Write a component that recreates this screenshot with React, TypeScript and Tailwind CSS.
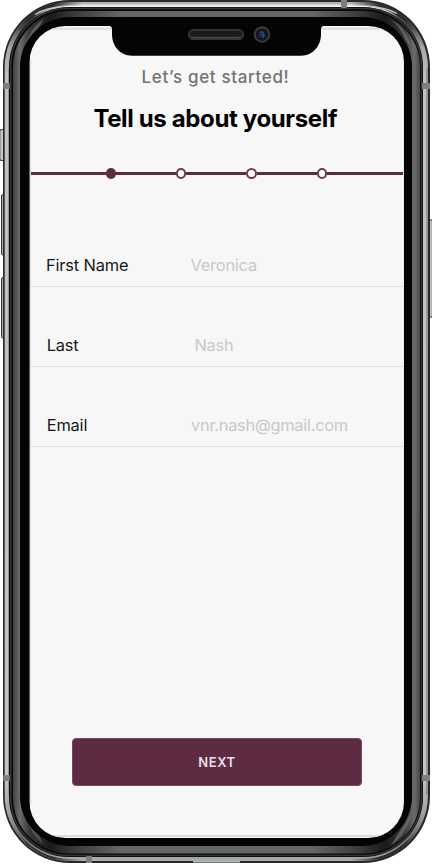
import React from "react";

const fields = [
  { label: "First Name", placeholder: "Veronica", labelPad: "pl-[15px]", inputPad: "pl-[0.5px]", tracking: "tracking-[-0.22px]" },
  { label: "Last", placeholder: "Nash", labelPad: "pl-[15.7px]", inputPad: "pl-[4.4px]", tracking: "tracking-[-0.2px]" },
  { label: "Email", placeholder: "vnr.nash@gmail.com", labelPad: "pl-[15.7px]", inputPad: "pl-px", tracking: "tracking-[-0.26px]" },
];

/** Metal body, side buttons, bezel and notch of the phone. */
function PhoneShell() {
  return (
    <svg className="pointer-events-none absolute inset-0" width="432" height="864" viewBox="0 0 432 864" fill="none" aria-hidden="true">
      <defs>
        <linearGradient id="steel" x1="0" y1="0" x2="0" y2="864" gradientUnits="userSpaceOnUse">
          <stop offset="0" stopColor="#a8a8a8" />
          <stop offset=".004" stopColor="#b4b4b4" />
          <stop offset=".007" stopColor="#f2f4f4" />
          <stop offset=".013" stopColor="#cfd2d2" />
          <stop offset=".02" stopColor="#555858" />
          <stop offset=".032" stopColor="#4f5252" />
          <stop offset=".055" stopColor="#a4a7a7" />
          <stop offset=".09" stopColor="#bfc2c2" />
          <stop offset=".9" stopColor="#c4c4c5" />
          <stop offset=".94" stopColor="#a0a4a2" />
          <stop offset=".965" stopColor="#6c7270" />
          <stop offset=".98" stopColor="#7d8581" />
          <stop offset="1" stopColor="#b2bbb7" />
        </linearGradient>
        <linearGradient id="inner" x1="13" y1="0" x2="421" y2="0" gradientUnits="userSpaceOnUse">
          <stop offset="0" stopColor="#404040" />
          <stop offset=".017" stopColor="#6c6c6c" />
          <stop offset=".04" stopColor="#383838" />
          <stop offset=".09" stopColor="#191919" />
          <stop offset=".15" stopColor="#3b3b3b" />
          <stop offset=".27" stopColor="#676767" />
          <stop offset=".73" stopColor="#676767" />
          <stop offset=".85" stopColor="#3b3b3b" />
          <stop offset=".91" stopColor="#191919" />
          <stop offset=".96" stopColor="#383838" />
          <stop offset=".983" stopColor="#6c6c6c" />
          <stop offset="1" stopColor="#404040" />
        </linearGradient>
        <linearGradient id="button" x1="0" y1="0" x2="1" y2="0">
          <stop offset="0" stopColor="#777" />
          <stop offset=".35" stopColor="#d2d4d4" />
          <stop offset="1" stopColor="#8c8e8e" />
        </linearGradient>
        <linearGradient id="speaker" x1="0" y1="0" x2="0" y2="1">
          <stop offset="0" stopColor="#161616" />
          <stop offset="1" stopColor="#222" />
        </linearGradient>
        <linearGradient id="shadeLeft" x1="18" y1="0" x2="82" y2="0" gradientUnits="userSpaceOnUse">
          <stop offset="0" stopColor="#2c2d2d" stopOpacity="0" />
          <stop offset=".15" stopColor="#2c2d2d" />
          <stop offset=".55" stopColor="#2c2d2d" />
          <stop offset="1" stopColor="#2c2d2d" stopOpacity="0" />
        </linearGradient>
        <linearGradient id="shadeRight" x1="351" y1="0" x2="415" y2="0" gradientUnits="userSpaceOnUse">
          <stop offset="0" stopColor="#2c2d2d" stopOpacity="0" />
          <stop offset=".45" stopColor="#2c2d2d" />
          <stop offset=".85" stopColor="#2c2d2d" />
          <stop offset="1" stopColor="#2c2d2d" stopOpacity="0" />
        </linearGradient>
        <radialGradient id="lens">
          <stop offset="0" stopColor="#182f5c" />
          <stop offset=".55" stopColor="#14213c" />
          <stop offset="1" stopColor="#101010" />
        </radialGradient>
        <clipPath id="glass">
          <rect x="29.5" y="26" width="374.5" height="812" rx="36" />
        </clipPath>
      </defs>

      <rect x="-.5" y="129.5" width="7" height="31" rx="2" fill="url(#button)" stroke="#2c2c2c" />
      <rect x="1.5" y="194.5" width="5" height="60.5" rx="1.5" fill="url(#button)" stroke="#333" />
      <rect x="1.5" y="277.5" width="5" height="60.5" rx="1.5" fill="url(#button)" stroke="#333" />
      <rect x="427.5" y="220" width="6" height="97" rx="1.5" fill="url(#button)" stroke="#222" />

      <rect x="3" y="0" width="427" height="863" rx="67" fill="#292929" />
      <rect x="4.7" y="2" width="423.2" height="859" rx="65" fill="url(#steel)" />
      <path d="M427 68V795" stroke="#747171" strokeWidth="1" />
      <path d="M8.5 68V795" stroke="#949797" strokeWidth="1" />
      <path d="M18 30.5A63.5 63.5 0 0 1 70 3.5H82" stroke="url(#shadeLeft)" strokeWidth="4" />
      <path d="M351 3.5H363A63.5 63.5 0 0 1 415 30.5" stroke="url(#shadeRight)" strokeWidth="4" />
      <path d="M415 833A63.5 63.5 0 0 1 363 860H351" stroke="url(#shadeRight)" strokeWidth="2.5" />
      <path d="M82 860H70A63.5 63.5 0 0 1 18 833" stroke="url(#shadeLeft)" strokeWidth="1.8" />
      <path d="M35 14.5C43 9.5 52 7 65 6.2" stroke="#c5c8c8" strokeWidth="1.4" />
      <path d="M368 6.2C381 7 390 9.5 397 13.5" stroke="#c5c8c8" strokeWidth="1.4" />

      <rect x="9" y="7" width="414" height="850" rx="60" fill="#080808" />
      <rect x="10.7" y="8.5" width="410.8" height="847" rx="58" stroke="#343434" strokeWidth="1.6" />
      <rect x="13" y="11" width="407" height="842.5" rx="56" fill="url(#inner)" />
      <path d="M25 50C27 36 33 26 44 19L37 30C31 36 27 42 25 50Z" fill="#777" opacity=".65" />
      <path d="M391 20C402 25 408 35 411 47L405 39C402 31 397 24 391 20Z" fill="#777" opacity=".65" />
      <path d="M26 815C29 829 35 838 43 844L37 831Z" fill="#646464" opacity=".65" />
      <path d="M391 845C402 838 409 826 412 812L404 825Z" fill="#777" opacity=".65" />
      <rect x="20" y="17" width="392" height="829" rx="50" fill="#040404" />

      <g fill="#7e7e7e">
        <rect x="3.3" y="83" width="6.5" height="6" />
        <rect x="422" y="83" width="8" height="6" />
        <rect x="3.3" y="775" width="6.5" height="6" />
        <rect x="422" y="775" width="8" height="6" />
        <rect x="341" y="0" width="6" height="8" />
        <rect x="86" y="856" width="6" height="7" />
      </g>
      <path d="M193 861.8H240" stroke="#b7bebb" strokeWidth="1.5" />

      <g clipPath="url(#glass)">
        <rect x="29.5" y="26" width="374.5" height="812" fill="#f7f7f7" />
        <path d="M52 28.7H112M321 28.7H381" stroke="#dedede" strokeWidth="2" />
        <path d="M54 836H379" stroke="#dedede" strokeWidth="2" />
        <path d="M30.3 59V805" stroke="#dedcdd" strokeWidth="1.5" />
        <path d="M403.5 62V802" stroke="#e8e8e8" />
      </g>

      <path d="M108 25.8C111 25.8 112 27 112 29.5V34C112 46 120 55.7 132 55.7H301C313 55.7 321 46 321 34V29.5C321 27 322 25.8 325 25.8V20H108Z" fill="#040404" />
      <rect x="188.9" y="29.9" width="54.2" height="9.2" rx="4.6" fill="url(#speaker)" stroke="#363636" strokeWidth="1.8" />
      <path d="M191.5 36.2C192.2 37.3 193 37.8 194 37.8H238C239.2 37.8 240 37.3 240.5 36.2" stroke="#666" strokeWidth=".8" />
      <circle cx="262" cy="34.5" r="7.3" fill="#171717" stroke="#3b3b3b" strokeWidth="2" />
      <circle cx="262" cy="34.5" r="4.8" fill="url(#lens)" />
      <path d="M259.8 32.5L262 31.7L264 33M261.7 34.7L264 34.5V36.8L262 37.3" stroke="#315cae" strokeWidth="1" />
      <circle cx="260" cy="36" r=".8" fill="#294681" />
    </svg>
  );
}

function ProgressSteps() {
  return (
    <div className="flex h-[11px] items-center">
      <span className="h-[3px] w-[74.5px] bg-[#5e2c42]" />
      <span className="size-[10.5px] shrink-0 rounded-full bg-[#5e2c42]" />
      {[0, 1, 2].map((step) => (
        <React.Fragment key={step}>
          <span className="h-[3px] w-[60px] bg-[#5e2c42]" />
          <span className="size-[10.3px] shrink-0 rounded-full border-2 border-[#6b3c50] bg-white" />
        </React.Fragment>
      ))}
      <span className="h-[3px] flex-1 bg-[#5e2c42]" />
    </div>
  );
}

export default function App() {
  return (
    <div className="relative h-[864px] w-[432px] overflow-hidden bg-white font-['Inter',sans-serif]">
      <PhoneShell />
      <main className="relative mr-[29px] ml-[31px] flex h-[864px] flex-col pt-[65px]">
        <p className="pr-[3px] text-center text-[17px] leading-[24px] font-medium tracking-[0.64px] text-[#737373]">Let’s get started!</p>
        <h1 className="mt-[14px] pr-[3.5px] text-center text-[24px] leading-[32px] font-bold tracking-[-0.36px] whitespace-nowrap text-black">Tell us about yourself</h1>
        <div className="mt-[33px]">
          <ProgressSteps />
        </div>
        <form className="mt-[28px] flex flex-1 flex-col">
          {fields.map((field) => (
            <label key={field.label} className="flex h-[80px] items-end border-b border-[#dedede] pb-[9px] leading-[24px]">
              <span className={`w-[159px] shrink-0 text-[16.4px] tracking-[-0.16px] text-[#171717] ${field.labelPad}`}>{field.label}</span>
              <span className={`text-[16.4px] text-[#c8c8c8] ${field.inputPad} ${field.tracking}`}>{field.placeholder}</span>
            </label>
          ))}
          <button type="button" className="mt-auto mb-[78px] ml-[41px] h-[48px] w-[290px] rounded-[4px] border border-[#79475d] bg-[#5e2c42] pt-[2px] text-[13px] font-semibold tracking-[0.6px] text-[#eadfe4]">NEXT</button>
        </form>
      </main>
    </div>
  );
}
